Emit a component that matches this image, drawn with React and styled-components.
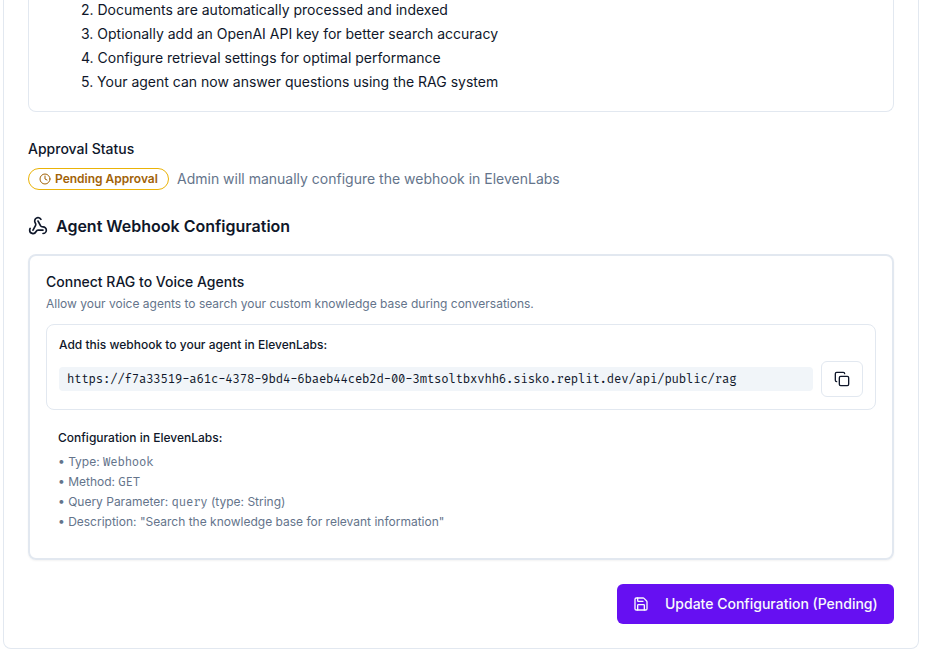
import React from "react";
import styled, { createGlobalStyle } from "styled-components";
import { Clock, Copy, Save, Webhook } from "lucide-react";

const GlobalStyle = createGlobalStyle`
  *, *::before, *::after { box-sizing: border-box; }
  body {
    margin: 0;
    background: #fff;
    color: #0f172a;
    font-family: "Inter", sans-serif;
    overflow: hidden;
  }
  h3, h4, p, ol, ul { margin: 0; padding: 0; font-weight: inherit; }
`;

const Viewport = styled.div`
  height: 649px;
  overflow: hidden;
  padding: 0 16px 0 3px;
`;

const Panel = styled.main`
  display: flex;
  flex-direction: column;
  height: 649px;
  padding: 0 24px;
  border: 1px solid #e2e8f0;
  border-top: 0;
  border-radius: 0 0 8px 8px;
`;

const StepsCard = styled.section`
  height: 112px;
  flex: none;
  padding-left: 52px;
  border: 1px solid #e2e8f0;
  border-top: 0;
  border-radius: 0 0 8px 8px;
`;

const StepList = styled.ol`
  display: flex;
  flex-direction: column;
  gap: 4px;
  list-style: none;
`;

const Step = styled.li`
  font-size: 14px;
  line-height: 20px;
  white-space: nowrap;
`;

const StatusTitle = styled.h4`
  margin-top: 27px;
  font-size: 14px;
  font-weight: 500;
  line-height: 20px;
`;

const StatusRow = styled.div`
  display: flex;
  align-items: center;
  gap: 8px;
  height: 22px;
  margin-top: 9px;
`;

const Badge = styled.span`
  display: inline-flex;
  align-items: center;
  gap: 4px;
  height: 22px;
  width: 141px;
  padding: 0 10px;
  border: 1px solid #eab308;
  border-radius: 999px;
  color: #a16207;
  font-size: 12px;
  font-weight: 600;
  line-height: 16px;
  white-space: nowrap;
  svg { flex: none; }
`;

const StatusNote = styled.span`
  color: #64748b;
  font-size: 14px;
  line-height: 20px;
`;

const SectionTitle = styled.h3`
  display: flex;
  align-items: center;
  gap: 8px;
  margin-top: 24px;
  font-size: 16px;
  font-weight: 600;
  line-height: 24px;
`;

const WebhookCard = styled.section`
  flex: none;
  height: 306px;
  margin-top: 16px;
  padding: 16px;
  border: 2px solid #e2e8f0;
  border-radius: 8px;
  box-shadow: 0 1px 2px rgba(0, 0, 0, 0.05);
`;

const CardTitle = styled.h4`
  font-size: 14px;
  font-weight: 500;
  line-height: 20px;
`;

const CardText = styled.p`
  margin-top: 4px;
  color: #64748b;
  font-size: 12px;
  line-height: 16px;
`;

const UrlBox = styled.div`
  margin-top: 12px;
  height: 86px;
  padding: 12px;
  border: 1px solid #e2e8f0;
  border-radius: 8px;
`;

const Label = styled.p`
  font-size: 12px;
  font-weight: 500;
  line-height: 16px;
`;

const UrlRow = styled.div`
  display: flex;
  align-items: center;
  gap: 8px;
  margin-top: 8px;
`;

const Mono = styled.code`
  font-family: "Fira Code", "Liberation Mono", monospace;
  font-size: 12px;
  letter-spacing: -0.187px;
`;

const Url = styled(Mono)`
  flex: 1;
  height: 24px;
  padding: 5px 8px 3px;
  border-radius: 4px;
  background: #f1f5f9;
  line-height: 16px;
  white-space: nowrap;
`;

const CopyButton = styled.button`
  display: flex;
  align-items: center;
  justify-content: center;
  width: 42px;
  height: 36px;
  padding: 0;
  border: 1px solid #e2e8f0;
  border-radius: 6px;
  background: #fff;
  color: #0f172a;
`;

const Details = styled.div`
  padding: 20px 12px 0;
`;

const DetailList = styled.ul`
  display: flex;
  flex-direction: column;
  gap: 4px;
  margin-top: 8px;
  list-style: none;
`;

const Detail = styled.li`
  color: #64748b;
  font-size: 12px;
  line-height: 16px;
  height: 16px;
  white-space: nowrap;
`;

const Actions = styled.footer`
  display: flex;
  justify-content: flex-end;
  margin-top: 24px;
`;

const SubmitButton = styled.button`
  display: flex;
  align-items: center;
  gap: 16px;
  width: 277px;
  height: 40px;
  padding: 0 16px;
  border: 0;
  border-radius: 6px;
  background: #6610f2;
  color: #f8fafc;
  font: 500 14px/20px "Inter", sans-serif;
  white-space: nowrap;
  svg { flex: none; }
`;

const steps = [
  "2. Documents are automatically processed and indexed",
  "3. Optionally add an OpenAI API key for better search accuracy",
  "4. Configure retrieval settings for optimal performance",
  "5. Your agent can now answer questions using the RAG system",
];

export default function App() {
  return (
    <Viewport>
      <GlobalStyle />
      <Panel>
        <StepsCard>
          <StepList>
            {steps.map((step) => <Step key={step}>{step}</Step>)}
          </StepList>
        </StepsCard>

        <StatusTitle>Approval Status</StatusTitle>
        <StatusRow>
          <Badge><Clock size={12} />Pending Approval</Badge>
          <StatusNote>Admin will manually configure the webhook in ElevenLabs</StatusNote>
        </StatusRow>

        <SectionTitle><Webhook size={20} />Agent Webhook Configuration</SectionTitle>
        <WebhookCard>
          <CardTitle>Connect RAG to Voice Agents</CardTitle>
          <CardText>Allow your voice agents to search your custom knowledge base during conversations.</CardText>
          <UrlBox>
            <Label>Add this webhook to your agent in ElevenLabs:</Label>
            <UrlRow>
              <Url>https://f7a33519-a61c-4378-9bd4-6baeb44ceb2d-00-3mtsoltbxvhh6.sisko.replit.dev/api/public/rag</Url>
              <CopyButton aria-label="Copy webhook URL"><Copy size={16} /></CopyButton>
            </UrlRow>
          </UrlBox>
          <Details>
            <Label>Configuration in ElevenLabs:</Label>
            <DetailList>
              <Detail>• Type: <Mono>Webhook</Mono></Detail>
              <Detail>• Method: <Mono>GET</Mono></Detail>
              <Detail>• Query Parameter: <Mono>query</Mono> (type: String)</Detail>
              <Detail>• Description: "Search the knowledge base for relevant information"</Detail>
            </DetailList>
          </Details>
        </WebhookCard>

        <Actions>
          <SubmitButton><Save size={16} />Update Configuration (Pending)</SubmitButton>
        </Actions>
      </Panel>
    </Viewport>
  );
}
